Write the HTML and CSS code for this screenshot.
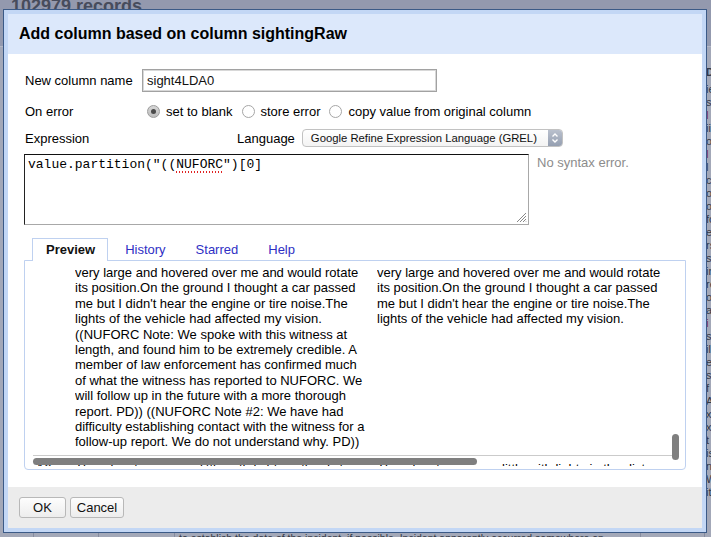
FILE: index.html
```html
<!DOCTYPE html>
<html>
<head>
<meta charset="utf-8">
<link rel="stylesheet" href="styles.css">
</head>
<body>
<div class="page">
  <div class="bg-records">102979 records</div>
  <div class="bg-table">
    <div class="bg-col"></div>
    <div class="bg-col"></div>
    <div class="bg-col"></div>
    <div class="bg-col bg-desc"><div class="bg-desc-line">to establish the date of the incident, if possible. Incident apparently occurred somewhere on</div></div>
    <div class="bg-col"></div>
    <div class="bg-col bg-last">
      <div class="bg-head">Date</div>
      <div>ies</div><div>s</div><div class="red">l</div><div>ii</div><div>oc</div><div class="red">l</div><div>l</div><div>c</div><div>or</div><div>ou</div><div>fo</div><div>e</div><div>rs</div><div>sh</div><div>in</div><div>re</div><div>o</div><div>a</div><div class="red">i</div><div>s</div><div>il</div><div>e</div><div>s</div><div>f</div><div>A</div><div>x</div><div>x</div><div>t</div><div>is</div><div>n</div><div>W</div><div>it</div>
    </div>
  </div>

  <div class="dialog">
    <div class="dlg-header">Add column based on column sightingRaw</div>
    <div class="dlg-body">
      <div class="form-grid">
        <label class="lbl">New column name</label>
        <input class="name-input" type="text" value="sight4LDA0">
        <label class="lbl">On error</label>
        <div class="radios">
          <span class="radio checked"></span><span class="rlabel">set to blank</span>
          <span class="radio"></span><span class="rlabel">store error</span>
          <span class="radio"></span><span class="rlabel">copy value from original column</span>
        </div>
      </div>
      <div class="expr-head">
        <span class="lbl expr-lbl">Expression</span>
        <span class="lang-lbl">Language</span>
        <div class="select">
          <span class="select-text">Google Refine Expression Language (GREL)</span>
          <span class="stepper">
            <svg width="14" height="16" viewBox="0 0 14 16"><path d="M4.5 6.5 L7 4 L9.5 6.5" fill="none" stroke="#fff" stroke-width="1.4"/><path d="M4.5 9.5 L7 12 L9.5 9.5" fill="none" stroke="#fff" stroke-width="1.4"/></svg>
          </span>
        </div>
      </div>
      <div class="expr-row">
        <div class="expr">value.partition("((<span class="spell">NUFORC</span>")[0]<svg class="grip" width="12" height="12" viewBox="0 0 12 12"><path d="M11 2 L2 11 M11 5 L5 11 M11 8 L8 11 M11 10.5 L10.5 11" stroke="#888" stroke-width="1"/></svg></div>
        <div class="status">No syntax error.</div>
      </div>
      <div class="tabs">
        <span class="tab active">Preview</span>
        <span class="tab">History</span>
        <span class="tab">Starred</span>
        <span class="tab">Help</span>
      </div>
      <div class="panel">
        <div class="scroll">
          <div class="prow first">
            <div class="pnum"></div>
            <div class="pcell">very large and hovered over me and would rotate<br>its position.On the ground I thought a car passed<br>me but I didn't hear the engine or tire noise.The<br>lights of the vehicle had affected my vision.<br>((NUFORC Note: We spoke with this witness at<br>length, and found him to be extremely credible. A<br>member of law enforcement has confirmed much<br>of what the witness has reported to NUFORC. We<br>will follow up in the future with a more thorough<br>report. PD)) ((NUFORC Note #2: We have had<br>difficulty establishing contact with the witness for a<br>follow-up report. We do not understand why. PD))</div>
            <div class="pcell">very large and hovered over me and would rotate<br>its position.On the ground I thought a car passed<br>me but I didn't hear the engine or tire noise.The<br>lights of the vehicle had affected my vision.</div>
          </div>
          <div class="prow">
            <div class="pnum">16.</div>
            <div class="pcell">This object was seen little with lights in the distance</div>
            <div class="pcell">This object was seen little with lights in the distance</div>
          </div>
        </div>
        <div class="hthumb"></div>
        <div class="vthumb"></div>
      </div>
    </div>
    <div class="dlg-footer">
      <button class="btn btn-ok">OK</button>
      <button class="btn btn-cancel">Cancel</button>
    </div>
  </div>
</div>
</body>
</html>
```

FILE: styles.css
```css
html, body {
  margin: 0;
  padding: 0;
}
body {
  font-family: "Liberation Sans", Arial, Helvetica, sans-serif;
  font-size: 13px;
  color: #000;
}
.page {
  position: relative;
  width: 711px;
  height: 537px;
  overflow: hidden;
  background: #9399ae;
}
.bg-records {
  margin-top: -4px;
  padding-left: 11px;
  height: 44px;
  font-size: 18px;
  font-weight: bold;
  line-height: 20px;
  color: #474c5c;
  white-space: nowrap;
}
.bg-table {
  display: grid;
  grid-template-columns: 34px 65px 76px 466px 64px 60px;
  height: 500px;
  border-top: 1px solid #b4b8c6;
  margin-top: 6px;
}
.bg-col {
  border-right: 1px solid #868c9f;
  background: #a3a8b8;
  font-size: 11px;
  line-height: 13px;
  color: #333846;
  overflow: hidden;
  white-space: nowrap;
}
.bg-desc-line {
  margin-top: 485px;
  padding-left: 4px;
  font-size: 10.5px;
}
.bg-last {
  padding-left: 1px;
  padding-top: 19px;
}
.bg-head {
  font-weight: bold;
  margin-bottom: 4px;
}
.red { color: #7b2333; }

.dialog {
  position: absolute;
  left: 3px;
  top: 9px;
  width: 694px;
  border: 1px solid #3b5a87;
  padding: 4px;
  background: #c3d7f5;
}
.dlg-header {
  height: 40px;
  background: #dce8fb;
  padding-left: 11px;
  font-size: 16px;
  font-weight: bold;
  line-height: 39px;
}
.dlg-body {
  height: 433px;
  box-sizing: border-box;
  background: #fff;
  padding: 15px 16px 0 16px;
}
.form-grid {
  display: grid;
  grid-template-columns: 118px 1fr;
  grid-template-rows: 23px 20px;
  row-gap: 9px;
  align-items: center;
}
.lbl {
  padding-left: 1px;
}
.name-input {
  width: 295px;
  height: 23px;
  box-sizing: border-box;
  margin: 0;
  border: 1px solid #a2a2a2;
  box-shadow: inset 0 0 0 1px #d8d8d8;
  padding: 0 4px 0 4px;
  font-family: "Liberation Sans", Arial, sans-serif;
  font-size: 13px;
  color: #111;
  outline: none;
}
.radios {
  display: flex;
  align-items: center;
  padding-left: 5px;
}
.radio {
  width: 13px;
  height: 13px;
  box-sizing: border-box;
  border: 1px solid #a6a6a6;
  border-radius: 50%;
  background: #fff;
  margin-right: 6px;
  display: flex;
  align-items: center;
  justify-content: center;
}
.radio.checked {
  background: linear-gradient(#d6d6d6, #bdbdbd);
  border-color: #9c9c9c;
}
.radio.checked::after {
  content: "";
  width: 5px;
  height: 5px;
  border-radius: 50%;
  background: #4a4a4a;
}
.rlabel {
  margin-right: 9px;
}
.expr-head {
  display: flex;
  align-items: center;
  height: 20px;
  margin-top: 7px;
}
.expr-lbl {
  width: 212px;
}
.lang-lbl {
  margin-right: 7px;
}
.select {
  width: 261px;
  height: 18px;
  box-sizing: border-box;
  border: 1px solid #c2c2c2;
  border-radius: 4px;
  background: linear-gradient(#ffffff, #f3f3f3);
  display: flex;
  align-items: center;
  overflow: hidden;
}
.select-text {
  flex: 1;
  padding-left: 8px;
  font-size: 11.3px;
  color: #111;
  white-space: nowrap;
}
.stepper {
  width: 14px;
  height: 16px;
  background: linear-gradient(#b9c0cd, #959fb1);
  display: flex;
}
.expr-row {
  display: flex;
  margin-top: 6px;
}
.expr {
  position: relative;
  width: 505px;
  height: 71px;
  box-sizing: border-box;
  border: 1px solid #a8a8a8;
  border-top-color: #111;
  border-left-color: #222;
  padding: 2px 3px;
  font-family: "Liberation Mono", "Courier New", monospace;
  font-size: 13px;
  line-height: 15px;
  white-space: pre;
}
.spell {
  background-image: linear-gradient(to right, #e02424 50%, transparent 50%);
  background-size: 3px 2px;
  background-repeat: repeat-x;
  background-position: 0 100%;
  padding-bottom: 1px;
}
.grip {
  position: absolute;
  right: 1px;
  bottom: 1px;
}
.status {
  margin-left: 8px;
  padding-top: 1px;
  color: #8c8c8c;
  line-height: 15px;
}
.tabs {
  display: flex;
  margin-top: 13px;
  padding-left: 8px;
  height: 22px;
}
.tab {
  height: 22px;
  box-sizing: border-box;
  padding: 0 12px 0 13px;
  margin-right: 3px;
  border: 1px solid transparent;
  border-bottom: none;
  line-height: 21px;
  color: #2f2fc4;
}
.tab.active {
  border-color: #bfd1f0;
  background: #fff;
  color: #111;
  font-weight: bold;
  height: 23px;
  position: relative;
  z-index: 1;
}
.panel {
  position: relative;
  height: 210px;
  box-sizing: border-box;
  border: 1px solid #bfd1f0;
  border-radius: 0 0 4px 4px;
  overflow: hidden;
}
.scroll {
  height: 205px;
  box-sizing: border-box;
  overflow: hidden;
  padding-top: 4px;
}
.prow {
  display: grid;
  grid-template-columns: 42px 302px 1fr;
  line-height: 15.4px;
  white-space: nowrap;
  margin: 0 7px 0 8px;
}
.prow.first {
  padding-bottom: 5px;
  border-bottom: 1px solid #cbcbcb;
}
.prow .pnum {
  padding-left: 4px;
}
.prow:not(.first) {
  padding-top: 5px;
}
.pcell {
  overflow: hidden;
}
.hthumb {
  position: absolute;
  left: 8px;
  top: 197px;
  width: 444px;
  height: 7px;
  border-radius: 4px;
  background: #7f7f7f;
}
.vthumb {
  position: absolute;
  left: 647px;
  top: 173px;
  width: 7px;
  height: 26px;
  border-radius: 4px;
  background: #7f7f7f;
}
.dlg-footer {
  height: 41px;
  box-sizing: border-box;
  background: #ececec;
  padding: 10px 11px;
  display: flex;
  gap: 4px;
}
.btn {
  height: 21px;
  box-sizing: border-box;
  margin: 0;
  padding: 0;
  border: 1px solid #b8b8b8;
  border-radius: 3px;
  background: linear-gradient(#fdfdfd, #ededed);
  font-family: "Liberation Sans", Arial, sans-serif;
  font-size: 13px;
  color: #111;
}
.btn-ok { width: 47px; }
.btn-cancel { width: 54px; }
```
